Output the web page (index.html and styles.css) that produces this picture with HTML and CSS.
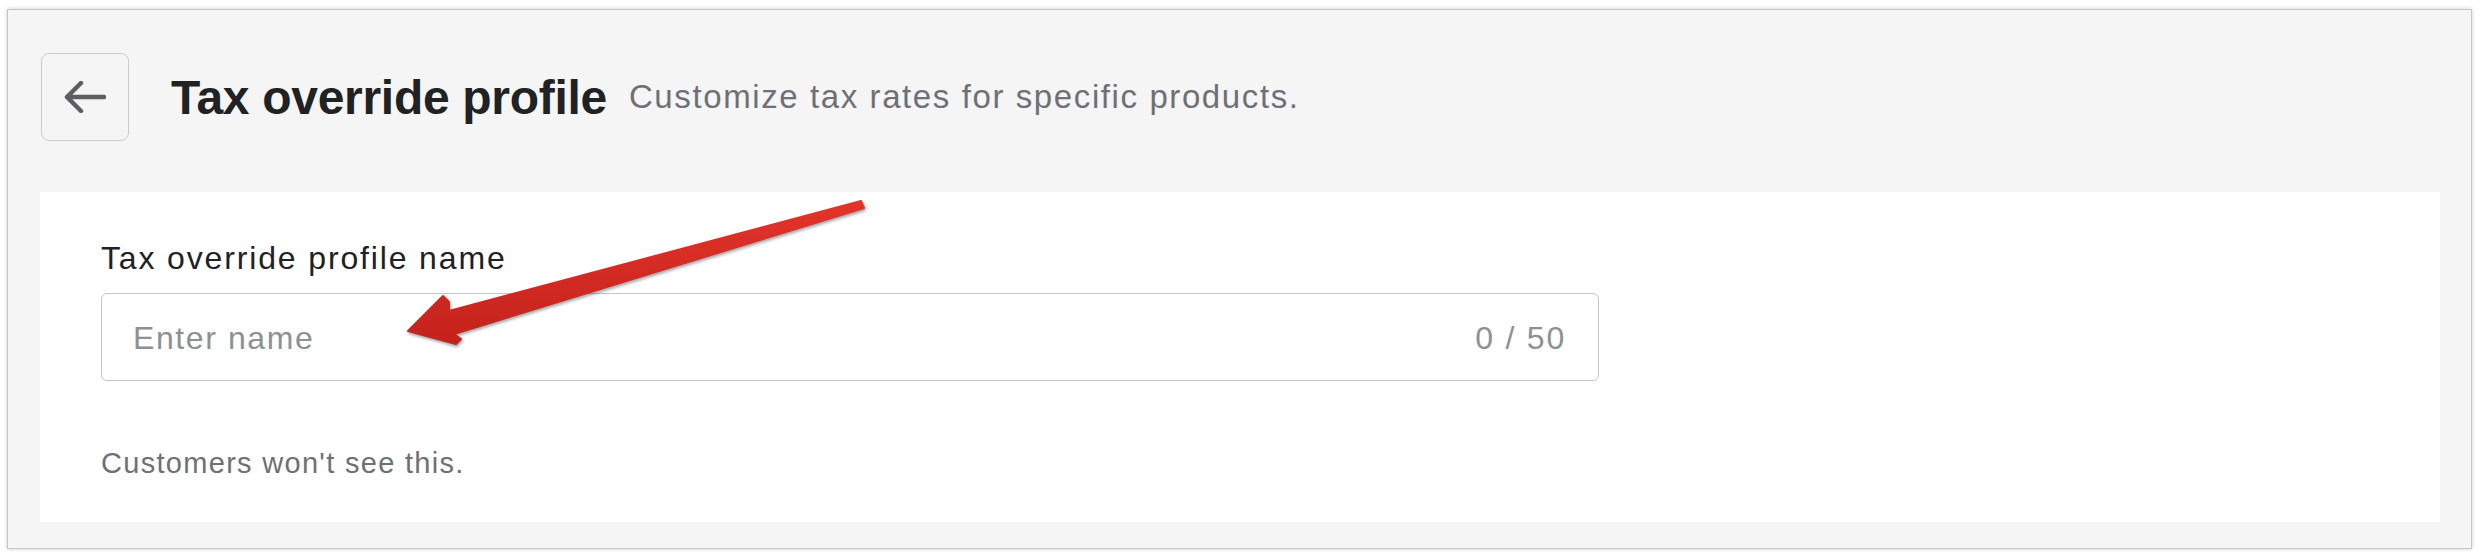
FILE: index.html
```html
<!DOCTYPE html>
<html lang="en">
<head>
  <meta charset="UTF-8">
  <title>Tax override profile</title>
  <link rel="stylesheet" href="styles.css">
</head>
<body>
  <div class="frame">
    <!-- Page header -->
    <header class="page-header">
      <button class="back-button" aria-label="Back">
        <svg width="42" height="32" viewBox="0 0 42 32">
          <path d="M3 16 H40 M3 16 L17 2 M3 16 L17 30" fill="none" stroke="#5c5f62" stroke-width="4.5" stroke-linecap="round" stroke-linejoin="round"/>
        </svg>
      </button>
      <h1 class="page-title">Tax override profile</h1>
      <p class="page-subtitle">Customize tax rates for specific products.</p>
    </header>

    <!-- Form card -->
    <section class="card">
      <label class="field-label" for="profileName">Tax override profile name</label>
      <div class="field-box">
        <input id="profileName" class="field-input" type="text" placeholder="Enter name">
        <span class="field-counter">0 / 50</span>
      </div>
      <p class="field-help">Customers won't see this.</p>
    </section>
  </div>

  <!-- Red annotation arrow -->
  <svg class="annotation" width="2482" height="558" viewBox="0 0 2482 558">
    <defs>
      <linearGradient id="arrowFill" x1="0" y1="0" x2="0" y2="1">
        <stop offset="0" stop-color="#e2342b"/>
        <stop offset="1" stop-color="#c4221b"/>
      </linearGradient>
    </defs>
    <polygon points="861,201 864,208 454,334 461,339 456,344 408,331 443,296 449,302 449,311"
             fill="url(#arrowFill)" stroke="url(#arrowFill)" stroke-width="2" stroke-linejoin="round"/>
  </svg>
</body>
</html>
```

FILE: styles.css
```css
/* Reset */
* {
  margin: 0;
  padding: 0;
  box-sizing: border-box;
}

body {
  font-family: "Liberation Sans", Arial, sans-serif;
  background: #fff;
  color: #202223;
  padding: 9px 10px 9px 7px;
}

/* Screenshot window */
.frame {
  height: 540px;
  background: #f5f5f5;
  border: 1px solid #c6c6c6;
  box-shadow: 0 0 4px rgba(0, 0, 0, 0.2);
  padding: 0 31px 26px 32px;
  display: flex;
  flex-direction: column;
}

/* Header */
.page-header {
  display: flex;
  align-items: center;
  padding: 43px 0 0 1px;
  margin-bottom: 51px;
}

.back-button {
  width: 88px;
  height: 88px;
  border: 1px solid #c9cccf;
  border-radius: 8px;
  background: transparent;
  display: flex;
  align-items: center;
  justify-content: center;
  margin-right: 42px;
}

.page-title {
  font-size: 48px;
  font-weight: bold;
  letter-spacing: -0.3px;
  color: #202223;
  margin-right: 22px;
}

.page-subtitle {
  font-size: 33px;
  letter-spacing: 1.6px;
  color: #6d7175;
}

/* Card */
.card {
  flex: 1;
  background: #fff;
  padding: 46px 61px 0;
}

.field-label {
  display: block;
  font-size: 32px;
  line-height: 40px;
  letter-spacing: 1.85px;
  color: #202223;
  margin-bottom: 15px;
}

.field-box {
  width: 1498px;
  height: 88px;
  border: 1px solid #c4c7ca;
  border-radius: 6px;
  display: flex;
  align-items: center;
  padding: 3px 32px 0 31px;
}

.field-input {
  flex: 1;
  border: none;
  outline: none;
  background: transparent;
  font-family: inherit;
  font-size: 32px;
  letter-spacing: 1.6px;
  color: #202223;
}

.field-input::placeholder {
  color: #8c9196;
}

.field-counter {
  font-size: 32px;
  letter-spacing: 1.8px;
  color: #8c9196;
}

.field-help {
  margin-top: 64px;
  font-size: 29px;
  line-height: 36px;
  letter-spacing: 1.3px;
  color: #6d7175;
}

/* Annotation overlay */
.annotation {
  position: absolute;
  top: 0;
  left: 0;
  pointer-events: none;
  filter: drop-shadow(1px 2px 1.5px rgba(0, 0, 0, 0.35));
}
```
